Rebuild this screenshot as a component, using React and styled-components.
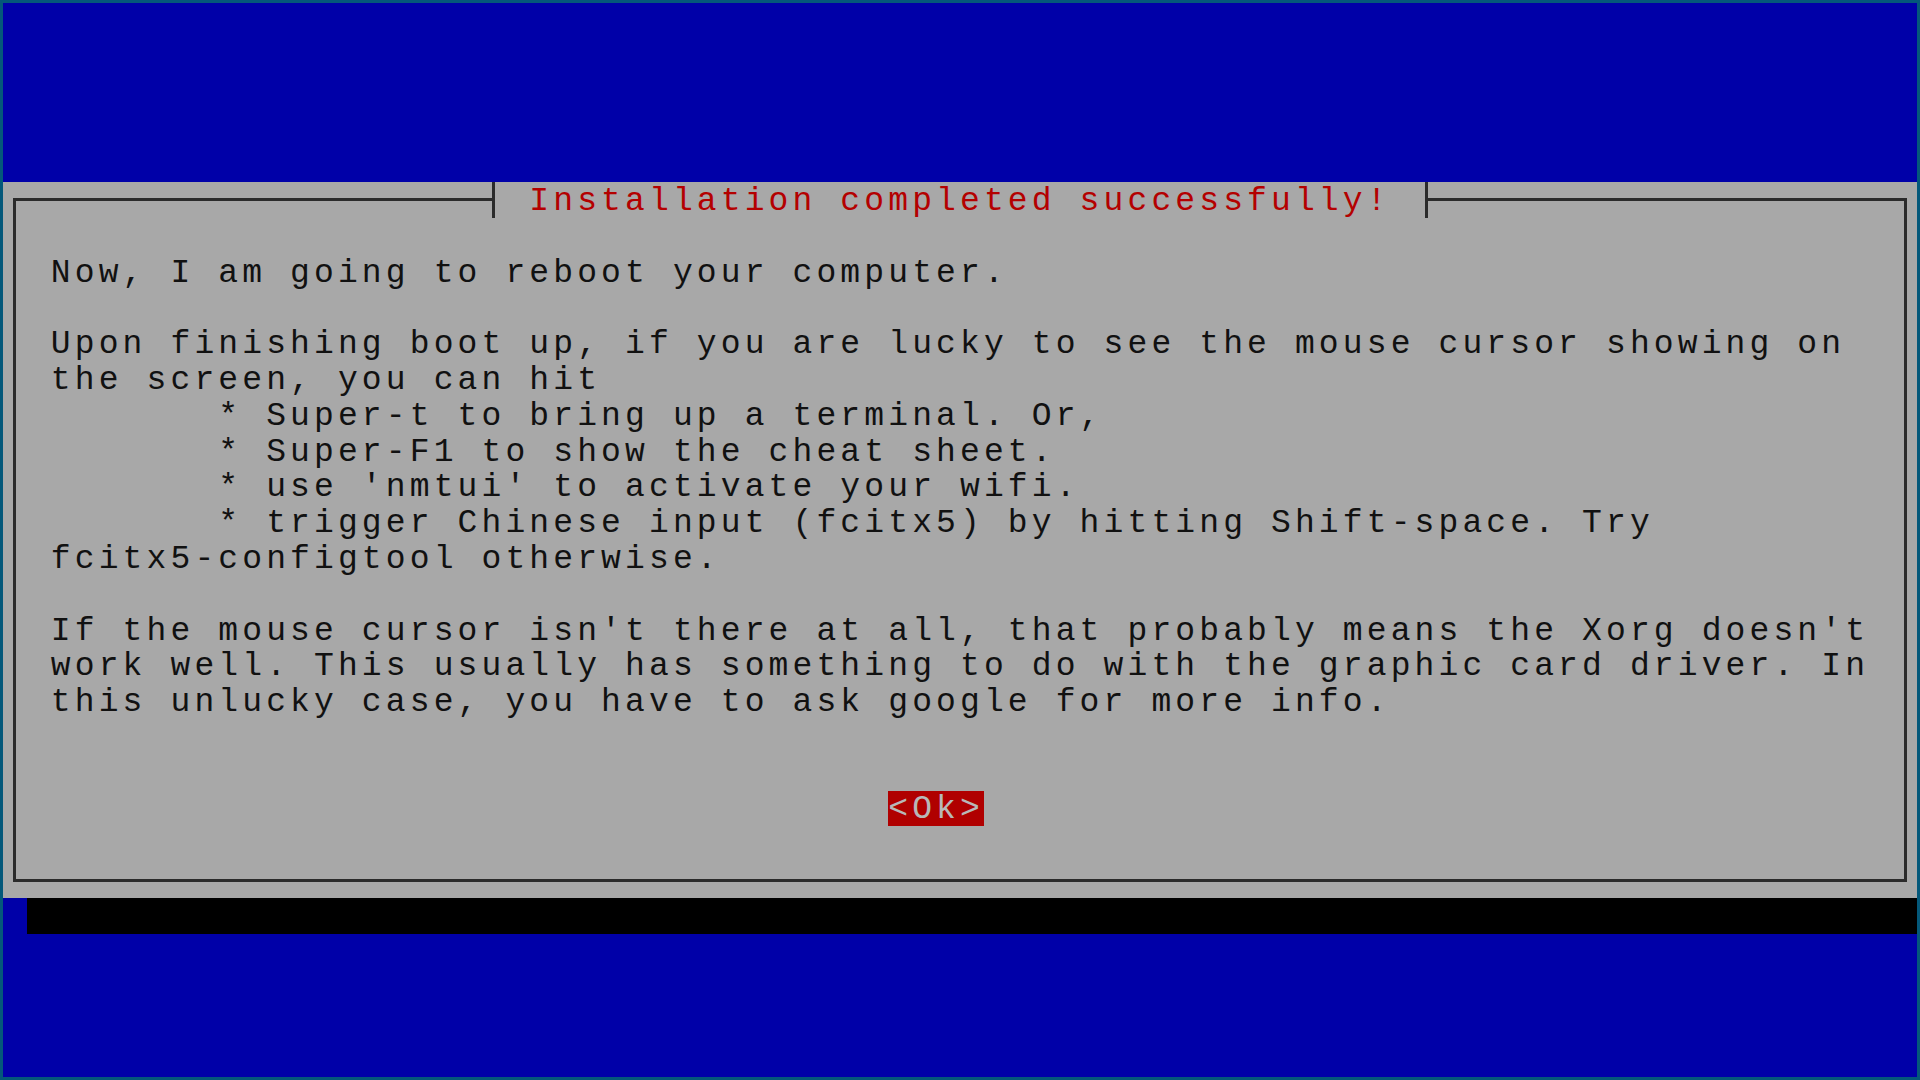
import React from 'react'
import styled, { createGlobalStyle } from 'styled-components'

// text-mode screen: 80 x 30 cells inside a 3px frame
const CW = 1914 / 80
const RH = 1074 / 30
const LINE = 3
const NUDGE = 2

const GlobalStyle = createGlobalStyle`
  html, body {
    margin: 0;
    padding: 0;
    background: #04587a;
    overflow: hidden;
  }
`

const Screen = styled.div`
  width: 1914px;
  height: 1074px;
  margin: 3px;
  background: #0000a8;
  padding-top: ${5 * RH}px;
  box-sizing: border-box;
  display: flex;
  flex-direction: column;
  font-family: "Liberation Mono", "DejaVu Sans Mono", monospace;
  font-size: 33px;
  letter-spacing: ${CW - 0.60009765625 * 33}px;
  line-height: ${RH}px;
`

const Dialog = styled.div`
  height: ${20 * RH}px;
  background: #a8a8a8;
  padding-left: ${CW / 2 - LINE / 2}px;
  display: flex;
  flex-direction: column;
`

const TitleRow = styled.div`
  display: flex;
  height: ${RH}px;
`

const Segment = styled.div`
  flex: 0 0 ${20 * CW}px;
  align-self: flex-end;
  height: ${RH / 2 + LINE / 2}px;
  box-sizing: border-box;
  border-top: ${LINE}px solid #2b2b2b;
  ${p => (p.$side === 'left' ? 'border-left' : 'border-right')}: ${LINE}px solid #2b2b2b;
`

const Tick = styled.div`
  flex: 0 0 ${LINE}px;
  background: #2b2b2b;
`

const Title = styled.div`
  flex: 0 0 ${39 * CW - LINE}px;
  padding-left: ${1.5 * CW - LINE / 2}px;
  padding-top: ${NUDGE}px;
  box-sizing: border-box;
  color: #b40000;
  white-space: pre;
`

const Body = styled.div`
  width: ${79 * CW + LINE}px;
  height: ${18.5 * RH + LINE / 2}px;
  box-sizing: border-box;
  border: ${LINE}px solid #2b2b2b;
  border-top: none;
  padding-top: ${RH}px;
  padding-left: ${1.5 * CW - LINE / 2}px;
`

const Message = styled.div`
  color: #111;
  white-space: pre;
  padding-top: ${NUDGE}px;
`

const ButtonRow = styled.div`
  margin-top: ${2 * RH - NUDGE}px;
  padding-left: ${35 * CW}px;
`

const OkButton = styled.span`
  display: inline-block;
  box-sizing: border-box;
  width: ${4 * CW}px;
  height: ${RH}px;
  padding-top: ${NUDGE}px;
  line-height: ${RH - NUDGE}px;
  background: #b00000;
  color: #b8b8b8;
  white-space: pre;
`

const Shadow = styled.div`
  height: ${RH}px;
  margin-left: ${CW}px;
  background: #000;
`

const lines = [
  'Now, I am going to reboot your computer.',
  '',
  'Upon finishing boot up, if you are lucky to see the mouse cursor showing on',
  'the screen, you can hit',
  '       * Super-t to bring up a terminal. Or,',
  '       * Super-F1 to show the cheat sheet.',
  "       * use 'nmtui' to activate your wifi.",
  '       * trigger Chinese input (fcitx5) by hitting Shift-space. Try',
  'fcitx5-configtool otherwise.',
  '',
  "If the mouse cursor isn't there at all, that probably means the Xorg doesn't",
  'work well. This usually has something to do with the graphic card driver. In',
  'this unlucky case, you have to ask google for more info.',
]

export default function App () {
  return (
    <>
      <GlobalStyle/>
      <Screen>
        <Dialog>
          <TitleRow>
            <Segment $side="left"/>
            <Tick/>
            <Title>Installation completed successfully!</Title>
            <Tick/>
            <Segment $side="right"/>
          </TitleRow>
          <Body>
            <Message>{lines.join('\n')}</Message>
            <ButtonRow>
              <OkButton>{'<Ok>'}</OkButton>
            </ButtonRow>
          </Body>
        </Dialog>
        <Shadow/>
      </Screen>
    </>
  )
}
